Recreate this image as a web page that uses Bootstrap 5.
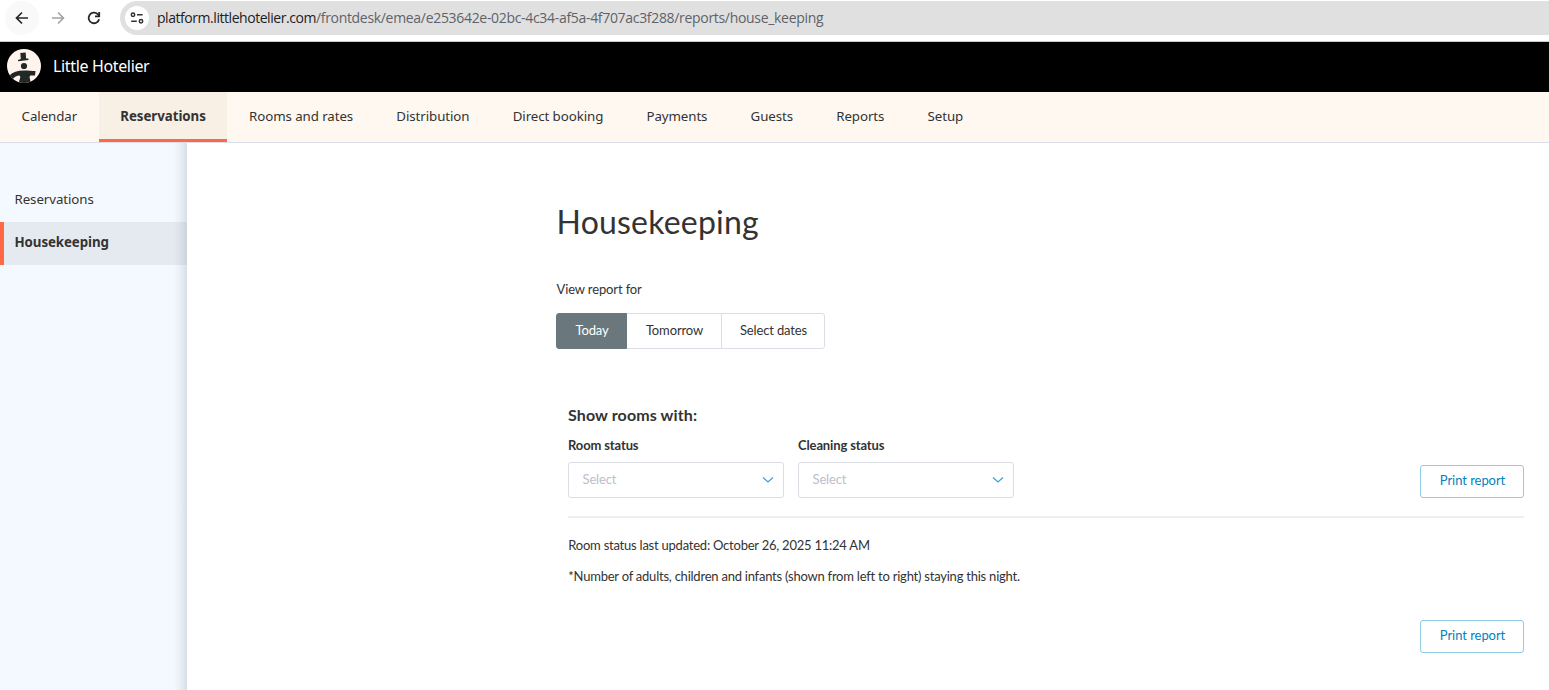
<!DOCTYPE html>
<html lang="en">
<head>
<meta charset="utf-8">
<meta name="viewport" content="width=device-width, initial-scale=1">
<title>Little Hotelier – Housekeeping</title>
<link href="https://cdn.jsdelivr.net/npm/bootstrap@5.3.0/dist/css/bootstrap.min.css" rel="stylesheet">
<style>
body{font:13px/20px Lato,"Liberation Sans",sans-serif;color:#333;height:690px;overflow:hidden;background:#fff}
.browser-bar{height:42px;border-bottom:1px solid #c8cacc}
.browser-bar svg{display:block}
.tool-round{width:34px;height:34px;margin-top:1px}
.back-round{background:#f9f9f9;margin-left:5px}
.address{height:34px;margin:1px 0 0 9px;background:#e0e0e0;border-radius:17px 0 0 17px;padding-left:5px}
.site-round{width:24px;height:24px;background:#fff}
.url-text{font:14px/20px "Open Sans",sans-serif;color:#5f6368;margin-left:8px;white-space:nowrap;letter-spacing:-.315px}
.url-text b{font-weight:400;color:#202124;letter-spacing:-.45px}
.brand-bar{height:50px;background:#000;padding:0 0 2px 7px}
.brand-name{font:16px/22px "Noto Sans",sans-serif;color:#fff;margin-left:12px;letter-spacing:-.35px}
.main-tabs{height:51px;background:#fef8f1;border-bottom:1px solid #d9dee8;font:13.3px/20px "Noto Sans",sans-serif;letter-spacing:-.08px}
.main-tabs .nav-link{color:#333;padding:14px 21.6px 13px;border-bottom:3px solid transparent;height:50px}
.main-tabs .nav-link.active{font-weight:700;background:#f8efe5;border-color:#ff6842;letter-spacing:-.05px}
.side-menu{width:187px;background:#f4f8ff;padding-top:36px;font:13.3px/20px "Noto Sans",sans-serif;letter-spacing:-.08px;position:relative}
.side-menu::after{content:"";position:absolute;inset:0 0 0 auto;width:14px;background:linear-gradient(to right,rgba(60,70,90,0),rgba(60,70,90,.05) 50%,rgba(60,70,90,.15));pointer-events:none}
.side-menu .nav-link{height:43px;padding:10px 10.5px;color:#333;border-left:4px solid transparent}
.side-menu .nav-link.active{font-weight:700;background:#e5eaf1;border-color:#ff6842}
.report{margin-left:369px;padding-top:58px;width:968px}
.report h1{font-size:32px;line-height:42px;font-weight:400;margin:0 0 36px .5px;letter-spacing:.2px}
.view-label{margin-left:.5px}
.day-switch{margin-top:14px}
.day-switch .btn{--bs-btn-font-size:13px;--bs-btn-line-height:18px;--bs-btn-border-color:#dcdee6;--bs-btn-color:#333;--bs-btn-border-radius:3px;flex:none;height:36px;padding:7px 0 9px 1px}
.day-switch .btn.active{background:#6a777d;border-color:#6a777d;color:#fff}
.filters{margin:55px 0 0 12px}
.filters h2{font-size:16px;line-height:22px;font-weight:700;margin:0 0 9px;letter-spacing:.12px}
.filters label{display:block;font-weight:700;margin-bottom:7px}
.picker{width:216px;height:36px;border:1px solid #dcdee6;border-radius:3px;color:#bcc0cc;padding:0 9px 2px 13.500px}
.picker svg{position:relative;top:1px}
.print-btn{--bs-btn-font-size:13px;--bs-btn-line-height:18px;--bs-btn-color:#0580bc;--bs-btn-border-color:#91cbe5;--bs-btn-border-radius:3px;padding:5px 0 8px 1px;width:104px;height:33px;letter-spacing:-.05px}
.divider{height:2px;background:#eee;margin:18px 0 17px}
.t13{letter-spacing:-.13px}
.note{letter-spacing:-.23px;padding-left:.3px}
</style>
</head>
<body class="d-flex flex-column">
<div class="browser-bar d-flex flex-shrink-0">
  <div class="tool-round back-round rounded-circle d-flex align-items-center justify-content-center">
    <svg width="16" height="16" fill="none" stroke="#252628" stroke-width="1.7"><path d="M14 8H3M8 2.500L2.500 8 8 13.500"/></svg>
  </div>
  <div class="tool-round d-flex align-items-center justify-content-center">
    <svg class="ms-1" width="16" height="16" fill="none" stroke="#a0a2a4" stroke-width="1.6"><path d="M2 8h11M8 2.500L13.500 8 8 13.500"/></svg>
  </div>
  <div class="tool-round d-flex align-items-center justify-content-center ms-1">
    <svg width="16" height="16" fill="none" stroke="#252628" stroke-width="1.8"><path d="M13.100 9.200A5.300 5.300 0 1 1 11.700 4.200L13 5.500"/><path d="M13.200 2v4.300H9"/></svg>
  </div>
  <div class="address d-flex align-items-center flex-grow-1">
    <div class="site-round rounded-circle d-flex align-items-center justify-content-center">
      <svg width="14" height="12" fill="none" stroke="#303234" stroke-width="1.5"><circle cx="3" cy="2.800" r="1.700"/><path d="M7 2.800h5.600M1.200 9.200h5.600"/><circle cx="11" cy="9.200" r="1.700"/></svg>
    </div>
    <div class="url-text"><b>platform.littlehotelier.com</b>/frontdesk/emea/e253642e-02bc-4c34-af5a-4f707ac3f288/reports/house_keeping</div>
  </div>
</div>
<header class="brand-bar d-flex align-items-center flex-shrink-0">
  <svg width="34" height="34" viewBox="0 0 34 34">
    <defs><clipPath id="disc"><circle cx="17" cy="17" r="17"/></clipPath></defs>
    <g clip-path="url(#disc)">
      <path fill="#fff3ed" d="M0 0h34v34H0z"/>
      <g fill="#222827">
        <path d="M13.300 4l5.400-.6.4 6 2.300.1v1.500l-10.300 1.200-.1-1.300 2.800-.9z"/>
        <circle cx="17" cy="17" r="3.100"/>
        <path d="M2.500 26.500c3-3.300 8-5 14.500-5 4 0 8 .4 11.500.5l-.5 4.500-4.700.1-.8 1.500 1.500 6.400H11.500l1.900-6.400-.9-1.500C10 26.700 7.500 28 5.300 30.500z"/>
      </g>
    </g>
  </svg>
  <div class="brand-name">Little Hotelier</div>
</header>
<nav class="main-tabs nav flex-nowrap flex-shrink-0">
  <a class="nav-link">Calendar</a><a class="nav-link active">Reservations</a><a class="nav-link">Rooms and rates</a><a class="nav-link">Distribution</a><a class="nav-link">Direct booking</a><a class="nav-link">Payments</a><a class="nav-link">Guests</a><a class="nav-link">Reports</a><a class="nav-link">Setup</a>
</nav>
<div class="d-flex flex-grow-1">
  <aside class="side-menu nav flex-column flex-nowrap flex-shrink-0">
    <a class="nav-link">Reservations</a><a class="nav-link active">Housekeeping</a>
  </aside>
  <main class="report flex-shrink-0">
    <h1>Housekeeping</h1>
    <div class="view-label t13">View report for</div>
    <div class="day-switch btn-group">
      <button class="btn active t13" style="width:71px">Today</button><button class="btn t13" style="width:96px">Tomorrow</button><button class="btn t13" style="width:104px">Select dates</button>
    </div>
    <section class="filters">
      <h2>Show rooms with:</h2>
      <div class="d-flex align-items-end">
        <div><label class="t13">Room status</label>
          <div class="picker d-flex align-items-center justify-content-between"><span class="t13">Select</span><svg width="12" height="8" fill="none" stroke="#3b9fd0" stroke-width="1.2"><path d="M1 1.500l5 4.500 5-4.500"/></svg></div></div>
        <div style="margin-left:14px"><label class="t13">Cleaning status</label>
          <div class="picker d-flex align-items-center justify-content-between"><span class="t13">Select</span><svg width="12" height="8" fill="none" stroke="#3b9fd0" stroke-width="1.2"><path d="M1 1.500l5 4.500 5-4.500"/></svg></div></div>
        <button class="btn print-btn ms-auto">Print report</button>
      </div>
      <div class="divider"></div>
      <div class="note">Room status last updated: October 26, 2025 11:24 AM</div>
      <div class="note" style="margin-top:11px">*Number of adults, children and infants (shown from left to right) staying this night.</div>
      <div class="d-flex" style="margin-top:34px"><button class="btn print-btn ms-auto">Print report</button></div>
    </section>
  </main>
</div>
<script src="https://cdn.jsdelivr.net/npm/bootstrap@5.3.0/dist/js/bootstrap.bundle.min.js"></script>
</body>
</html>
